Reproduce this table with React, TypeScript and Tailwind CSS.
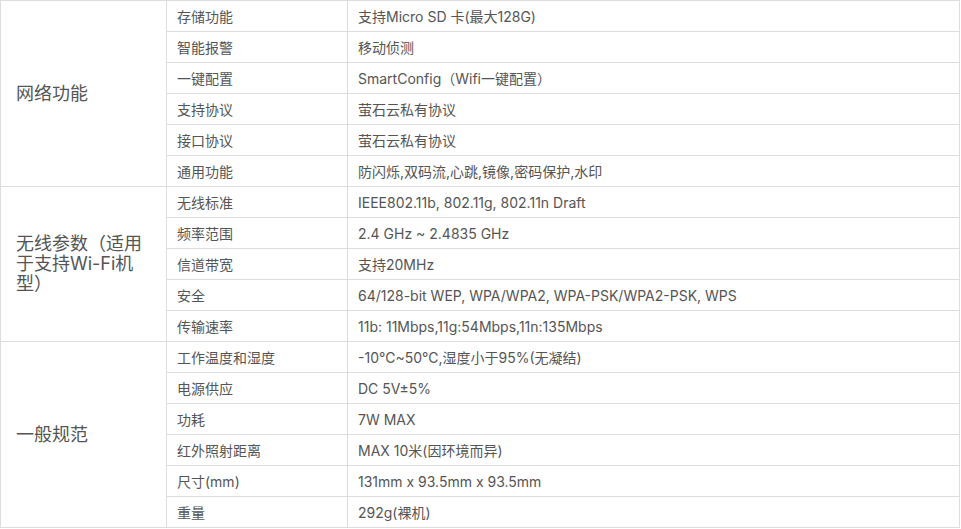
const sections: { title: string; rows: [string, string][] }[] = [
  {
    title: '网络功能',
    rows: [
      ['存储功能', '支持Micro SD 卡(最大128G)'],
      ['智能报警', '移动侦测'],
      ['一键配置', 'SmartConfig（Wifi一键配置）'],
      ['支持协议', '萤石云私有协议'],
      ['接口协议', '萤石云私有协议'],
      ['通用功能', '防闪烁,双码流,心跳,镜像,密码保护,水印'],
    ],
  },
  {
    title: '无线参数（适用于支持Wi-Fi机型）',
    rows: [
      ['无线标准', 'IEEE802.11b, 802.11g, 802.11n Draft'],
      ['频率范围', '2.4 GHz ~ 2.4835 GHz'],
      ['信道带宽', '支持20MHz'],
      ['安全', '64/128-bit WEP, WPA/WPA2, WPA-PSK/WPA2-PSK, WPS'],
      ['传输速率', '11b: 11Mbps,11g:54Mbps,11n:135Mbps'],
    ],
  },
  {
    title: '一般规范',
    rows: [
      ['工作温度和湿度', '-10℃~50℃,湿度小于95%(无凝结)'],
      ['电源供应', 'DC 5V±5%'],
      ['功耗', '7W MAX'],
      ['红外照射距离', 'MAX 10米(因环境而异)'],
      ['尺寸(mm)', '131mm x 93.5mm x 93.5mm'],
      ['重量', '292g(裸机)'],
    ],
  },
]

export default function App() {
  return (
    <div className="h-[529px] w-[961px] bg-white font-['Inter','Noto_Sans_CJK_SC',sans-serif] text-[#555]">
      <table className="w-[960px] table-fixed border-collapse">
        <colgroup>
          <col className="w-[166px]" />
          <col className="w-[181px]" />
          <col />
        </colgroup>
        <tbody>
          {sections.map((s) =>
            s.rows.map(([k, v], i) => (
              <tr key={s.title + k} className="h-[31px]">
                {i === 0 && (
                  <td
                    rowSpan={s.rows.length}
                    className="border border-[#ddd] px-[15px] align-middle text-[18px] leading-[20px]"
                  >
                    {s.title}
                  </td>
                )}
                <td className="border border-[#ddd] px-[10px] pt-[2px] text-[14px] leading-[28px]">{k}</td>
                <td className="border border-[#ddd] px-[10px] pt-[2px] text-[14px] leading-[28px]">{v}</td>
              </tr>
            )),
          )}
        </tbody>
      </table>
    </div>
  )
}
